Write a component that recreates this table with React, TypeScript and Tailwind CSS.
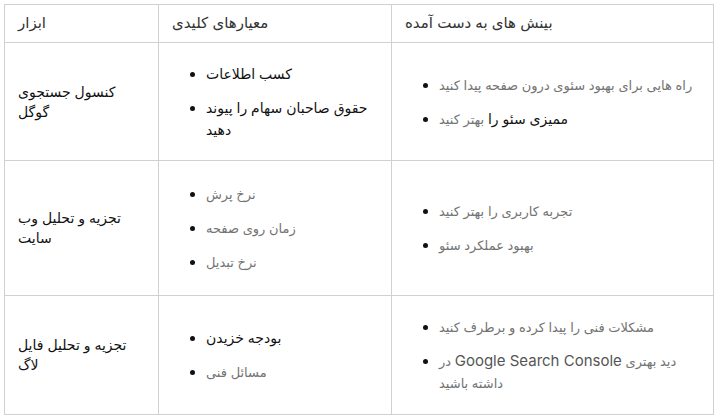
import type { ReactNode } from 'react'

type Item = { lines: ReactNode[]; dark?: boolean }

type Row = {
  tool: string[]
  metrics: Item[]
  insights: Item[]
  height: string
}

const rows: Row[] = [
  {
    tool: ['کنسول جستجوی', 'گوگل'],
    metrics: [
      { lines: ['کسب اطلاعات'], dark: true },
      { lines: ['حقوق صاحبان سهام را پیوند', 'دهید'], dark: true },
    ],
    insights: [
      { lines: ['راه هایی برای بهبود سئوی درون صفحه پیدا کنید'] },
      {
        lines: [
          <>
            <span className="text-[14px] text-[#111]">ممیزی سئو را</span> بهتر کنید
          </>,
        ],
      },
    ],
    height: 'h-[118px]',
  },
  {
    tool: ['تجزیه و تحلیل وب', 'سایت'],
    metrics: [
      { lines: ['نرخ پرش'] },
      { lines: ['زمان روی صفحه'] },
      { lines: ['نرخ تبدیل'] },
    ],
    insights: [
      { lines: ['تجربه کاربری را بهتر کنید'] },
      { lines: ['بهبود عملکرد سئو'] },
    ],
    height: 'h-[135px]',
  },
  {
    tool: ['تجزیه و تحلیل فایل', 'لاگ'],
    metrics: [{ lines: ['بودجه خزیدن'], dark: true }, { lines: ['مسائل فنی'] }],
    insights: [
      { lines: ['مشکلات فنی را پیدا کرده و برطرف کنید'] },
      {
        lines: [
          <>
            در <span className="text-[15px] text-[#555]">Google Search Console</span> دید بهتری
          </>,
          'داشته باشید',
        ],
      },
    ],
    height: 'h-[119px]',
  },
]

function BulletList({ items }: { items: Item[] }) {
  return (
    <ul className="flex flex-col gap-[12px] pl-[18px]">
      {items.map((item, i) => (
        <li key={i} className="flex items-start">
          <span className="mt-[9px] mr-[11px] h-[5px] w-[5px] shrink-0 rounded-full bg-[#111]" />
          <span
            className={
              item.dark
                ? 'text-[14px] leading-[22px] text-[#111]'
                : 'text-[13px] leading-[22px] text-[#737373]'
            }
          >
            {item.lines.map((line, j) => (
              <span key={j} className="block whitespace-nowrap">
                {line}
              </span>
            ))}
          </span>
        </li>
      ))}
    </ul>
  )
}

export default function App() {
  return (
    <div
      className="min-h-screen bg-white pl-[4px] pt-[4px]"
      style={{ fontFamily: "Inter, 'DejaVu Sans', sans-serif" }}
    >
      <table className="w-[709px] table-fixed border-collapse border border-[#d0d0d0]">
        <colgroup>
          <col className="w-[154px]" />
          <col className="w-[233px]" />
          <col className="w-[322px]" />
        </colgroup>
        <thead>
          <tr className="h-[38px]">
            {['ابزار', 'معیارهای کلیدی', 'بینش های به دست آمده'].map((h) => (
              <th
                key={h}
                className="border border-[#d0d0d0] px-[13px] text-left align-middle text-[15px] font-normal text-[#333]"
              >
                {h}
              </th>
            ))}
          </tr>
        </thead>
        <tbody>
          {rows.map((row, i) => (
            <tr key={i} className={row.height}>
              <td className="border border-[#d0d0d0] px-[13px] align-middle text-[14px] leading-[20px] text-[#111]">
                {row.tool.map((t) => (
                  <span key={t} className="block whitespace-nowrap">
                    {t}
                  </span>
                ))}
              </td>
              <td className="border border-[#d0d0d0] px-[13px] align-middle">
                <BulletList items={row.metrics} />
              </td>
              <td className="border border-[#d0d0d0] px-[13px] align-middle">
                <BulletList items={row.insights} />
              </td>
            </tr>
          ))}
        </tbody>
      </table>
    </div>
  )
}
